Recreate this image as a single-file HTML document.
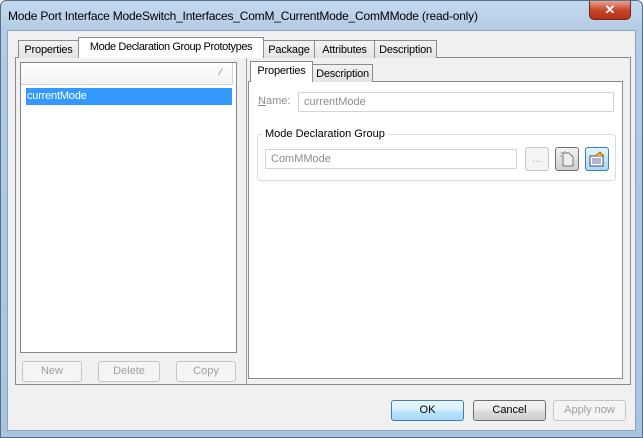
<!DOCTYPE html>
<html><head><meta charset="utf-8"><style>
*{box-sizing:border-box;margin:0;padding:0}
body{width:643px;height:438px;overflow:hidden;font-family:"Liberation Sans",sans-serif;font-size:11px;color:#000;background:#fff}
.win{position:absolute;left:0;top:0;width:643px;height:438px;background:linear-gradient(180deg,#c4d9ee 0,#b3cbe4 30px,#aac4df 100%);border:1px solid #55708e;border-radius:6px 6px 0 0}
.title{position:absolute;left:7px;top:8px;font-size:12px;letter-spacing:-0.2px;color:#000}
.close{position:absolute;left:588px;top:0;width:42px;height:19px;background:linear-gradient(#e8a492,#c9462c 50%,#b52f14);border:1px solid #6e2a1e;border-top:none;border-radius:0 0 5px 5px;color:#fff;font-weight:bold;text-align:center;font-size:13px;line-height:18px}
.client{position:absolute;left:7px;top:30px;width:629px;height:401px;background:#f0f0f0;border:1px solid #8da3bd}
.a{position:absolute;white-space:nowrap}
.tab{position:absolute;height:18px;border:1px solid #898c95;border-bottom:none;background:linear-gradient(#f3f3f3,#e3e3e3);text-align:center;line-height:19px;font-size:11px;white-space:nowrap;overflow:hidden;letter-spacing:-0.2px}
.tab.sel{background:#fff;height:21px;line-height:19px}
.btn{position:absolute;height:21px;border:1px solid #adadad;border-radius:3px;background:linear-gradient(#f2f2f2,#ebebeb 50%,#dddddd 50%,#cfcfcf);text-align:center;line-height:19px;font-size:11px}
.dis{color:#a0a0a0;border-color:#c5c5c5;background:#f4f4f4}
.field{position:absolute;border:1px solid #d3d3d3;background:#fff;color:#8d8d8d;padding-left:5px;line-height:18px;height:20px;font-size:11px}
</style></head><body>
<div class="win">
<div class="title">Mode Port Interface ModeSwitch_Interfaces_ComM_CurrentMode_ComMMode (read-only)</div>
<div class="close">✕</div>
</div>
<div class="client"></div>
<div class="a" style="left:15px;top:57px;width:616px;height:328px;background:#fff;border:1px solid #898c95"></div>
<div class="tab" style="left:18px;top:40px;width:61px">Properties</div>
<div class="tab sel" style="left:78px;top:37px;width:186px;letter-spacing:-0.4px">Mode Declaration Group Prototypes</div>
<div class="tab" style="left:263px;top:40px;width:52px">Package</div>
<div class="tab" style="left:314px;top:40px;width:61px">Attributes</div>
<div class="tab" style="left:374px;top:40px;width:63px">Description</div>
<div class="a" style="left:16px;top:58px;width:226px;height:326px;background:#f0f0f0"></div>
<div class="a" style="left:20px;top:62px;width:217px;height:291px;background:#fff;border:1px solid #828790"></div>
<div class="a" style="left:21px;top:63px;width:212px;height:22px;background:linear-gradient(#fff,#f3f4f6);border-bottom:1px solid #d5d5d5;border-right:1px solid #d5d5d5"></div>
<div class="a" style="left:220px;top:67px;color:#666;font-size:9px">⁄</div>
<div class="a" style="left:26px;top:88px;width:206px;height:17px;background:#3399ff;color:#fff;padding-left:1px;line-height:17px;font-size:11px;letter-spacing:-0.2px">currentMode</div>
<div class="btn dis" style="left:22px;top:361px;width:60px">New</div>
<div class="btn dis" style="left:98px;top:361px;width:62px">Delete</div>
<div class="btn dis" style="left:176px;top:361px;width:60px">Copy</div>
<div class="a" style="left:242px;top:58px;width:5px;height:326px;background:#f0f0f0;border-right:1px solid #a0a0a0"></div>
<div class="a" style="left:247px;top:58px;width:383px;height:326px;background:#f0f0f0"></div>
<div class="a" style="left:248px;top:81px;width:375px;height:298px;background:#fff;border:1px solid #898c95"></div>
<div class="tab sel" style="left:250px;top:61px;height:21px;width:63px">Properties</div>
<div class="tab" style="left:312px;top:64px;width:61px">Description</div>
<div class="a" style="left:258px;top:95px;color:#8d8d8d;font-size:11px"><u>N</u>ame:</div>
<div class="field" style="left:298px;top:92px;width:316px">currentMode</div>
<div class="a" style="left:257px;top:134px;width:359px;height:47px;border:1px solid #dcdcdc;border-radius:3px"></div>
<div class="a" style="left:262px;top:128px;background:#fff;padding:0 3px;font-size:11px">Mode Declaration Group</div>
<div class="field" style="left:265px;top:149px;width:252px">ComMMode</div>
<div class="btn dis" style="left:525px;top:147px;width:24px;height:24px;line-height:22px">...</div>
<div class="btn" style="left:555px;top:147px;width:24px;height:24px;border-color:#707070;background:linear-gradient(#f2f2f2,#d0d0d0)"><svg width="22" height="22" style="position:absolute;left:0;top:0"><path d="M7 5h6l4 4v9H7z" fill="#eee" stroke="#777"/><path d="M5 4l2 2M9 3v2M4 8h2" stroke="#999"/></svg></div>
<div class="btn" style="left:585px;top:147px;width:24px;height:24px;border-color:#3c7fb1;background:linear-gradient(#e5f4fc,#a7d9f5)"><svg width="22" height="22" style="position:absolute;left:0;top:0"><rect x="4" y="8" width="13" height="10" fill="#fff" stroke="#446"/><path d="M6 11h9M6 13h9M6 15h9" stroke="#66a"/><path d="M9 8l5-4 4 4" fill="#e8b030" stroke="#a07010"/></svg></div>
<div class="btn" style="left:391px;top:400px;width:73px;border-color:#3c7fb1;background:linear-gradient(#eaf6fd,#d9f0fc 50%,#bee6fd 50%,#a7d9f5)">OK</div>
<div class="btn" style="left:473px;top:400px;width:73px;border-color:#707070">Cancel</div>
<div class="btn dis" style="left:553px;top:400px;width:73px">Apply now</div>
</body></html>
